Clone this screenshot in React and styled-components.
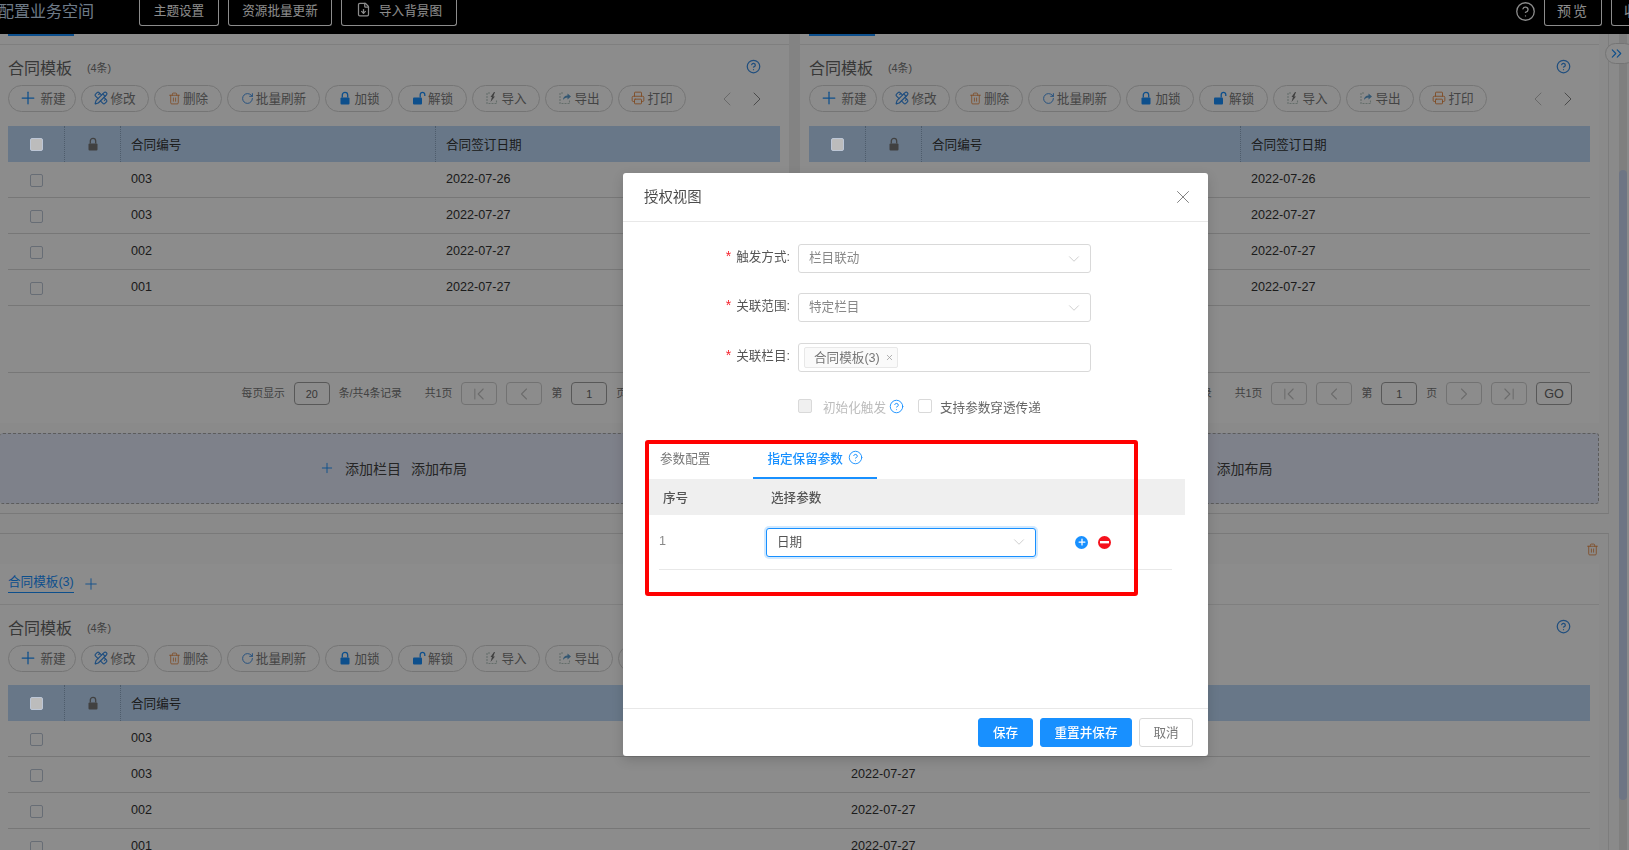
import React from 'react'
import styled, { createGlobalStyle } from 'styled-components'
import {
  Plus, PencilRuler, Trash2, RotateCw, Printer, CircleHelp, ChevronLeft, ChevronRight,
  ChevronDown, ChevronFirst, ChevronLast, ChevronsRight, X, FileDown,
} from 'lucide-react'

const GlobalStyle = createGlobalStyle`
  html, body { margin: 0; padding: 0; height: 100%; overflow: hidden; }
  body {
    background: #fbfbfb;
    color: #333;
    font-family: "Liberation Sans", "Noto Sans CJK SC", sans-serif;
    font-size: 12.6px;
  }
  * { box-sizing: border-box; }
`

const Page = styled.div`
  height: 850px;
  display: flex;
  flex-direction: column;
  overflow: hidden;
`
const TopBar = styled.header`
  flex: 0 0 34px;
  background: #000;
  display: flex;
  align-items: flex-start;
  overflow: hidden;
  position: relative;
`
const AppName = styled.div`
  width: 141px;
  flex: none;
  margin-left: -2px;
  margin-top: 2px;
  font-size: 16px;
  line-height: 20px;
  color: #c9dff5;
`
const BarButton = styled.div`
  height: 26px;
  flex: none;
  width: ${p => p.$w}px;
  margin-right: ${p => p.$mr ?? 9}px;
  padding-bottom: 6px;
  border: 1px solid #fff;
  border-top: 0;
  border-radius: 0 0 3px 3px;
  color: #fff;
  display: flex;
  align-items: center;
  justify-content: center;
  gap: 8px;
  font-size: ${p => p.$fs ?? 12.6}px;
  letter-spacing: ${p => p.$ls ?? 0}px;
`
const BarRight = styled.div`
  margin-left: auto;
  display: flex;
  align-items: flex-start;
  margin-right: -40px;
`
const BarHelp = styled.div`
  color: #fff;
  margin: 1px 8px 0 0;
  height: 21px;
  svg { display: block; }
`
const Body = styled.div`
  flex: 1;
  display: flex;
  min-height: 0;
`
const Main = styled.main`
  flex: 1;
  min-width: 0;
  overflow: hidden;
  padding-right: 10px;
`
const ScrollTrack = styled.div`
  flex: 0 0 8px;
  margin-right: 2px;
  background: #e8e8e8;
  padding-top: 136px;
`
const ScrollThumb = styled.div`
  height: 630px;
  background: #c8d5f0;
  border-radius: 4px;
`
const Section = styled.section`
  border-right: 1px solid #e4e4e4;
  border-bottom: ${p => (p.$closed ? '1px solid #dcdcdc' : '0')};
  border-top: ${p => (p.$open ? '1px solid #dcdcdc' : '0')};
  padding-bottom: ${p => (p.$closed ? '9px' : '0')};
  margin-bottom: ${p => (p.$closed ? '19px' : '0')};
`
const PanelRow = styled.div`
  display: grid;
  grid-template-columns: 789px 799px;
  column-gap: 11px;
  width: 1599px;
  background: #efefef;
`
const Panel = styled.div`
  background: #fff;
  padding: 0 9px 0 ${p => p.$pl ?? 9}px;
  height: ${p => (p.$h ? `${p.$h}px` : 'auto')};
  width: ${p => (p.$w ? `${p.$w}px` : 'auto')};
  position: relative;
`
const TabStub = styled.div`
  height: 11px;
  margin: 0 -9px 0 ${p => p.$ml ?? -9}px;
  border-bottom: 1px solid #e8e8e8;
`
const TabStubMark = styled.div`
  width: 66px;
  height: 2px;
  margin-left: ${p => p.$ml}px;
  background: #1890ff;
`
const TitleRow = styled.div`
  height: 40px;
  padding-top: 3px;
  display: flex;
  align-items: center;
`
const Title = styled.h3`
  margin: 0;
  font-size: 16px;
  font-weight: 400;
  color: #666;
`
const Count = styled.span`
  margin-left: 15px;
  font-size: 10.8px;
  color: #777;
`
const TitleHelp = styled.span`
  margin-left: auto;
  margin-right: ${p => p.$mr}px;
  color: #3a8ee6;
  height: 15px;
  svg { display: block; }
`
const Toolbar = styled.div`
  display: flex;
  align-items: center;
  gap: 5px;
  height: 27px;
  margin-bottom: ${p => p.$mb ?? 14}px;
`
const Pill = styled.div`
  flex: none;
  width: ${p => p.$w ?? 68}px;
  height: 27px;
  padding-bottom: 2px;
  border: 1px solid #d6d6d6;
  border-radius: 14px;
  display: flex;
  align-items: center;
  justify-content: center;
  gap: 2px;
  color: #7c7c7c;
  svg { flex: none; margin-top: 1px; }
`
const ToolArrows = styled.div`
  margin-left: auto;
  display: flex;
  gap: 6px;
  margin-right: ${p => p.$mr}px;
  svg { display: block; }
`
const Table = styled.div`
  min-height: ${p => (p.$min ? `${p.$min}px` : '0')};
  border-bottom: ${p => (p.$min ? '1px solid #d9d9d9' : '0')};
`
const Row = styled.div`
  display: grid;
  grid-template-columns: 56px 56px ${p => p.$col}px 1fr;
  height: 36px;
  align-items: center;
  background: ${p => (p.$head ? '#bdd9f8' : 'transparent')};
  border-bottom: ${p => (p.$head ? '0' : '1px solid #d9d9d9')};
`
const Cell = styled.div`
  height: 100%;
  display: flex;
  align-items: center;
  justify-content: ${p => (p.$center ? 'center' : 'flex-start')};
  padding-left: ${p => (p.$center ? 0 : 10)}px;
  padding-bottom: 1px;
  color: #333;
  border-left: 1px dotted ${p => (p.$sep ? '#8fa8c4' : 'transparent')};
`
const Check = styled.span`
  display: inline-block;
  width: 13px;
  height: 13px;
  border: 1px solid #bcc6d6;
  border-radius: 2px;
  background: ${p => (p.$head ? '#bcbcbc' : 'transparent')};
  position: relative;
  z-index: ${p => (p.$head ? 11 : 'auto')};
  margin-top: 2px;
`
const Pager = styled.div`
  height: 41px;
  padding: 9px 18px 0 0;
  display: flex;
  justify-content: flex-end;
  align-items: flex-start;
  color: #777;
  font-size: 10.8px;
`
const PagerText = styled.span`
  line-height: 23px;
  margin-right: ${p => p.$mr ?? 9}px;
  white-space: nowrap;
`
const PagerBox = styled.div`
  width: 36px;
  height: 23px;
  margin-right: ${p => p.$mr ?? 9}px;
  border: 1px solid ${p => (p.$off ? '#d0d0d0' : '#a0a0a0')};
  border-radius: 4px;
  color: ${p => (p.$off ? '#c4c4c4' : '#666')};
  font-size: ${p => p.$fs ?? 10.8}px;
  display: flex;
  align-items: center;
  justify-content: center;
`
const AddBand = styled.div`
  margin-top: 10px;
  height: 71px;
  width: 1599px;
  display: grid;
  grid-template-columns: 1fr 1fr;
  background: #e6ecfb;
  border: 1px dashed #a8a8a8;
  border-left: 0;
  border-radius: 3px;
`
const AddItem = styled.div`
  display: flex;
  align-items: center;
  justify-content: center;
  color: #444;
  font-size: 14px;
  gap: 10px;
  padding: 0 ${p => p.$pr ?? 0}px 2px 0;
  svg { color: #1890ff; }
`
const SectionHead = styled.div`
  height: 30px;
  display: flex;
  justify-content: flex-end;
  align-items: center;
  padding-right: 9px;
  color: #e8863c;
`
const BottomTabs = styled.div`
  height: 41px;
  margin: 0 -9px 0 -8px;
  padding-left: 8px;
  border-bottom: 1px solid #e8e8e8;
  display: flex;
  align-items: flex-start;
`
const BottomTab = styled.div`
  height: 29px;
  line-height: 36px;
  color: #1890ff;
  font-size: 12.6px;
  border-bottom: 1px solid #1890ff;
`
const BottomPlus = styled.span`
  margin: 11px 0 0 8px;
  color: #1890ff;
  height: 18px;
  svg { display: block; }
`
const Collapse = styled.div`
  position: absolute;
  left: 1605px;
  top: 43px;
  width: 30px;
  height: 21px;
  border-radius: 11px;
  background: #fff;
  border: 1px solid #d4d4d4;
  color: #1890ff;
  padding: 1px 0 0 2px;
  svg { display: block; }
`
const Mask = styled.div`
  position: fixed;
  inset: 0;
  background: rgba(0, 0, 0, 0.45);
  z-index: 10;
`
const Modal = styled.div`
  position: fixed;
  z-index: 20;
  left: 623px;
  top: 173px;
  width: 585px;
  height: 583px;
  background: #fff;
  border-radius: 3px;
  display: flex;
  flex-direction: column;
  box-shadow: 0 4px 12px rgba(0, 0, 0, 0.15);
`
const ModalHead = styled.div`
  flex: 0 0 49px;
  padding: 0 14px 4px 21px;
  border-bottom: 1px solid #e8e8e8;
  display: flex;
  align-items: center;
  justify-content: space-between;
  color: #4c4c4c;
  font-size: 14.4px;
  svg { color: #777; display: block; margin-top: 3px; }
`
const ModalBody = styled.div`
  flex: 1;
  padding-top: 22px;
  position: relative;
`
const FormRow = styled.div`
  display: flex;
  align-items: center;
  height: 29px;
  margin-bottom: ${p => p.$mb ?? 20}px;
`
const FormLabel = styled.label`
  width: 175px;
  padding-right: 8px;
  padding-bottom: 6px;
  text-align: right;
  color: #555;
  flex: none;
`
const Star = styled.span`
  color: #f5222d;
  font-size: 14px;
  margin-right: 5px;
`
const Select = styled.div`
  width: ${p => p.$w ?? 293}px;
  height: 29px;
  flex: none;
  background: #fff;
  border: 1px solid ${p => (p.$focus ? '#1890ff' : '#d9d9d9')};
  box-shadow: ${p => (p.$focus ? '0 0 0 2px rgba(24, 144, 255, 0.2)' : 'none')};
  border-radius: 3px;
  padding: 0 10px 4px;
  display: flex;
  align-items: center;
  justify-content: space-between;
  color: ${p => (p.$focus ? '#555' : '#888')};
  svg { color: #bfbfbf; flex: none; margin: 4px -3px 0 0; }
`
const TagBox = styled.div`
  width: 293px;
  height: 29px;
  flex: none;
  border: 1px solid #d9d9d9;
  border-radius: 3px;
  padding: 3px 5px;
`
const Tag = styled.span`
  width: 94px;
  height: 21px;
  background: #fafafa;
  border: 1px solid #e8e8e8;
  border-radius: 2px;
  padding: 0 0 3px 9px;
  display: flex;
  align-items: center;
  gap: 5px;
  color: #777;
  svg { color: #999; margin-top: 3px; }
`
const CheckRow = styled.div`
  display: flex;
  align-items: center;
  height: 14px;
  margin: 27px 0 26px 175px;
`
const FormCheck = styled.span`
  width: 14px;
  height: 14px;
  border: 1px solid #d9d9d9;
  border-radius: 2px;
  background: ${p => (p.$off ? '#f0f0f0' : '#fff')};
  flex: none;
`
const CheckText = styled.span`
  margin-left: ${p => p.$ml}px;
  color: ${p => (p.$off ? '#bdbdbd' : '#666')};
  white-space: nowrap;
`
const SmallHelp = styled.span`
  color: #1890ff;
  margin: 0 14px 0 3px;
  height: 15px;
  svg { display: block; }
`
const ParamBlock = styled.div`
  margin: 0 23px 0 22px;
`
const Tabs = styled.div`
  display: flex;
  height: 40px;
`
const Tab = styled.div`
  height: 40px;
  margin-left: ${p => p.$ml ?? 0}px;
  padding: 0 ${p => p.$pr ?? 14}px 2px ${p => p.$pl ?? 14}px;
  display: flex;
  align-items: center;
  gap: 5px;
  color: ${p => (p.$active ? '#1890ff' : '#777')};
  border-bottom: 2px solid ${p => (p.$active ? '#1890ff' : 'transparent')};
  font-weight: ${p => (p.$active ? 500 : 400)};
  svg { display: block; }
`
const ParamHead = styled.div`
  height: 36px;
  background: #efefef;
  display: grid;
  grid-template-columns: 108px 1fr;
  align-items: center;
  padding: 0 0 2px 18px;
  font-weight: 500;
  color: #555;
`
const ParamRow = styled.div`
  height: 55px;
  margin: 0 13px 0 14px;
  border-bottom: 1px solid #e8e8e8;
  display: flex;
  align-items: center;
`
const ParamIndex = styled.span`
  width: 107px;
  flex: none;
  padding-bottom: 2px;
  color: #888;
`
const RoundIcons = styled.div`
  margin-left: 39px;
  display: flex;
  gap: 10px;
`
const RoundIcon = styled.span`
  width: 13px;
  height: 13px;
  border-radius: 50%;
  background: ${p => p.$bg};
  display: flex;
  align-items: center;
  justify-content: center;
  color: #fff;
  svg { display: block; }
`
const Annotation = styled.div`
  position: absolute;
  left: 22px;
  top: 218px;
  width: 493px;
  height: 156px;
  border: 4px solid #ff0000;
  border-radius: 3px;
  pointer-events: none;
`
const ModalFoot = styled.div`
  flex: 0 0 48px;
  border-top: 1px solid #e8e8e8;
  padding: 9px 15px 0 0;
  display: flex;
  justify-content: flex-end;
  align-items: flex-start;
  gap: 7px;
`
const FootButton = styled.button`
  width: ${p => p.$w}px;
  height: 29px;
  padding: 0 0 2px;
  font: inherit;
  font-weight: ${p => (p.$primary ? 500 : 400)};
  color: ${p => (p.$primary ? '#fff' : '#777')};
  background: ${p => (p.$primary ? '#1890ff' : '#fff')};
  border: 1px solid ${p => (p.$primary ? '#1890ff' : '#d9d9d9')};
  border-radius: 3px;
`

// 导入/导出的小图标，图标库里没有一样的
const BoxArrow = ({ out }) => (
  <svg width="14" height="14" viewBox="0 0 14 14" fill="none">
    <path d="M5 2H2v10.5h9.5V9" stroke="#b8c8c4" strokeWidth="1.1" strokeDasharray="2 1" />
    {out ? (
      <path d="M5 9c0-3 2-4.5 4.5-4.5V2.5L13 5.5 9.5 8.5V6.5C7.5 6.5 6 7.5 5 9z" fill="#5f9fd0" />
    ) : (
      <path d="M9 1L5.5 6H7L5.5 11l4.5-5.5H8.3L10 1z" fill="#777" />
    )}
  </svg>
)

const Padlock = ({ open, color }) => (
  <svg width="14" height="14" viewBox="0 0 14 14" fill="none">
    {open ? (
      <>
        <path d="M8.2 6.5V3.7a2.3 2.3 0 0 1 4.6 0V5" stroke={color} strokeWidth="1.3" />
        <rect x="1" y="6.5" width="9" height="7" rx="1" fill={color} />
      </>
    ) : (
      <>
        <path d="M4.3 6.5V4a2.7 2.7 0 0 1 5.4 0v2.5" stroke={color} strokeWidth="1.3" />
        <rect x="2.5" y="6.5" width="9" height="7" rx="1" fill={color} />
      </>
    )}
  </svg>
)

const tools = [
  { label: '新建', w: 68, icon: <Plus size={20} color="#1890ff" strokeWidth={1.5} /> },
  { label: '修改', w: 68, icon: <PencilRuler size={14} color="#3a8ee6" /> },
  { label: '删除', w: 68, icon: <Trash2 size={13} color="#e8863c" strokeWidth={1.5} /> },
  { label: '批量刷新', w: 93, icon: <RotateCw size={13} color="#3a8ee6" strokeWidth={1.7} /> },
  { label: '加锁', w: 68, icon: <Padlock color="#1890ff" /> },
  { label: '解锁', w: 69, icon: <Padlock open color="#1890ff" /> },
  { label: '导入', w: 68, icon: <BoxArrow /> },
  { label: '导出', w: 68, icon: <BoxArrow out /> },
  { label: '打印', w: 68, icon: <Printer size={14} color="#e8863c" strokeWidth={1.5} /> },
]

const rows = [
  ['003', '2022-07-26'],
  ['003', '2022-07-27'],
  ['002', '2022-07-27'],
  ['001', '2022-07-27'],
]

const ContractTable = ({ col, min }) => (
  <Table $min={min}>
    <Row $head $col={col}>
      <Cell $center><Check $head /></Cell>
      <Cell $center $sep><Padlock color="#777" /></Cell>
      <Cell $sep>合同编号</Cell>
      <Cell $sep>合同签订日期</Cell>
    </Row>
    {rows.map((r, i) => (
      <Row key={i} $col={col}>
        <Cell $center><Check /></Cell>
        <Cell />
        <Cell>{r[0]}</Cell>
        <Cell>{r[1]}</Cell>
      </Row>
    ))}
  </Table>
)

const TemplateHead = ({ helpRight, arrowRight, mb }) => (
  <>
    <TitleRow>
      <Title>合同模板</Title>
      <Count>(4条)</Count>
      <TitleHelp $mr={helpRight}><CircleHelp size={15} /></TitleHelp>
    </TitleRow>
    <Toolbar $mb={mb}>
      {tools.map(t => (
        <Pill key={t.label} $w={t.w}>{t.icon}<span>{t.label}</span></Pill>
      ))}
      {arrowRight != null && (
        <ToolArrows $mr={arrowRight}>
          <ChevronLeft size={24} color="#c0c0c0" strokeWidth={1} />
          <ChevronRight size={24} color="#888" strokeWidth={1} />
        </ToolArrows>
      )}
    </Toolbar>
  </>
)

const Pagination = () => (
  <Pager>
    <PagerText>每页显示</PagerText>
    <PagerBox>20</PagerBox>
    <PagerText $mr={23}>条/共4条记录</PagerText>
    <PagerText>共1页</PagerText>
    <PagerBox $off><ChevronFirst size={20} strokeWidth={1.3} /></PagerBox>
    <PagerBox $off><ChevronLeft size={20} strokeWidth={1.3} /></PagerBox>
    <PagerText>第</PagerText>
    <PagerBox>1</PagerBox>
    <PagerText>页</PagerText>
    <PagerBox $off><ChevronRight size={20} strokeWidth={1.3} /></PagerBox>
    <PagerBox $off><ChevronLast size={20} strokeWidth={1.3} /></PagerBox>
    <PagerBox $mr={0} $fs={12.6}>GO</PagerBox>
  </Pager>
)

const App = () => {
  return (
    <>
      <GlobalStyle />
      <Page>
        <TopBar>
          <AppName>配置业务空间</AppName>
          <BarButton $w={80}>主题设置</BarButton>
          <BarButton $w={104}>资源批量更新</BarButton>
          <BarButton $w={116}><FileDown size={15} />导入背景图</BarButton>
          <BarRight>
            <BarHelp><CircleHelp size={21} strokeWidth={1.5} /></BarHelp>
            <BarButton $w={58} $mr={9} $fs={14} $ls={2}>预览</BarButton>
            <BarButton $w={58} $mr={0} $fs={14} $ls={2}>收起</BarButton>
          </BarRight>
        </TopBar>
        <Body>
          <Main>
            <Section $closed>
              <PanelRow>
                <Panel $pl={8} $h={389}>
                  <TabStub $ml={-8}><TabStubMark $ml={8} /></TabStub>
                  <TemplateHead helpRight={19} arrowRight={11} />
                  <ContractTable col={315} min={247} />
                  <Pagination />
                </Panel>
                <Panel $h={389}>
                  <TabStub><TabStubMark $ml={9} /></TabStub>
                  <TemplateHead helpRight={19} arrowRight={10} />
                  <ContractTable col={319} min={247} />
                  <Pagination />
                </Panel>
              </PanelRow>
              <AddBand>
                <AddItem $pr={13}>
                  <Plus size={16} strokeWidth={1.4} />
                  <span>添加栏目</span>
                  <span>添加布局</span>
                </AddItem>
                <AddItem>
                  <Plus size={16} strokeWidth={1.4} />
                  <span>添加栏目</span>
                  <span>添加布局</span>
                </AddItem>
              </AddBand>
            </Section>
            <Section $open>
              <SectionHead><Trash2 size={13} strokeWidth={1.5} /></SectionHead>
              <Panel $pl={8} $w={1599}>
                <BottomTabs>
                  <BottomTab>合同模板(3)</BottomTab>
                  <BottomPlus><Plus size={18} strokeWidth={1.2} /></BottomPlus>
                </BottomTabs>
                <TemplateHead helpRight={19} mb={13} />
                <ContractTable col={720} />
              </Panel>
            </Section>
          </Main>
          <ScrollTrack><ScrollThumb /></ScrollTrack>
        </Body>
        <Collapse><ChevronsRight size={17} strokeWidth={1.6} /></Collapse>
        <Mask />
        <Modal>
          <ModalHead>
            <span>授权视图</span>
            <X size={22} strokeWidth={1} />
          </ModalHead>
          <ModalBody>
            <FormRow>
              <FormLabel><Star>*</Star>触发方式:</FormLabel>
              <Select>栏目联动<ChevronDown size={18} strokeWidth={1} /></Select>
            </FormRow>
            <FormRow $mb={21}>
              <FormLabel><Star>*</Star>关联范围:</FormLabel>
              <Select>特定栏目<ChevronDown size={18} strokeWidth={1} /></Select>
            </FormRow>
            <FormRow $mb={0}>
              <FormLabel><Star>*</Star>关联栏目:</FormLabel>
              <TagBox><Tag>合同模板(3)<X size={9} /></Tag></TagBox>
            </FormRow>
            <CheckRow>
              <FormCheck $off />
              <CheckText $ml={11} $off>初始化触发</CheckText>
              <SmallHelp><CircleHelp size={15} strokeWidth={1.5} /></SmallHelp>
              <FormCheck />
              <CheckText $ml={8}>支持参数穿透传递</CheckText>
            </CheckRow>
            <ParamBlock>
              <Tabs>
                <Tab $pl={15}>参数配置</Tab>
                <Tab $ml={29} $active>指定保留参数<CircleHelp size={15} strokeWidth={1.5} /></Tab>
              </Tabs>
              <ParamHead>
                <span>序号</span>
                <span>选择参数</span>
              </ParamHead>
              <ParamRow>
                <ParamIndex>1</ParamIndex>
                <Select $w={270} $focus>日期<ChevronDown size={18} strokeWidth={1} /></Select>
                <RoundIcons>
                  <RoundIcon $bg="#1890ff"><Plus size={10} strokeWidth={3} /></RoundIcon>
                  <RoundIcon $bg="#f5121d"><svg width="9" height="3" viewBox="0 0 9 3"><rect width="9" height="2.4" fill="#fff" /></svg></RoundIcon>
                </RoundIcons>
              </ParamRow>
            </ParamBlock>
            <Annotation />
          </ModalBody>
          <ModalFoot>
            <FootButton $w={55} $primary>保存</FootButton>
            <FootButton $w={92} $primary>重置并保存</FootButton>
            <FootButton $w={54}>取消</FootButton>
          </ModalFoot>
        </Modal>
      </Page>
    </>
  )
}

export default App
